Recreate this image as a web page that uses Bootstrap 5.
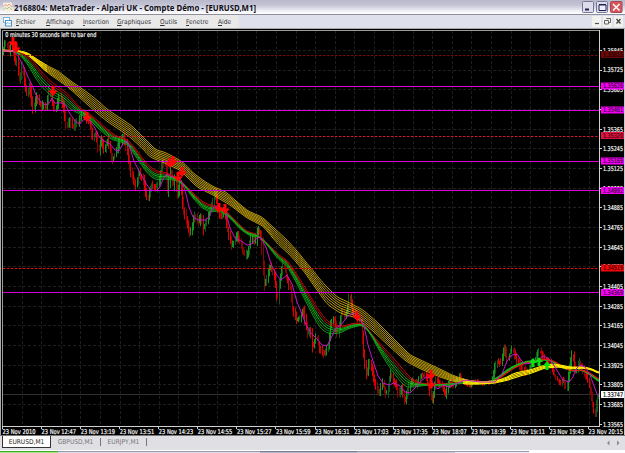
<!DOCTYPE html>
<html lang="fr">
  <head>
    <meta charset="UTF-8" />
    <meta name="viewport" content="width=device-width, initial-scale=1.0" />
    <title>MetaTrader - EURUSD,M1</title>
    <link
      rel="stylesheet"
      href="https://cdn.jsdelivr.net/npm/bootstrap@5.3.3/dist/css/bootstrap.min.css"
    />
    <style>
      body {
        width: 625px;
        height: 453px;
        font-family: "DejaVu Sans Condensed", "DejaVu Sans", sans-serif;
        font-size: 6.6px;
        line-height: 1;
        background: #e0dfe3;
      }
      .title-bar {
        height: 15px;
        padding: 0 2px 0 3px;
        background: linear-gradient(#b9b9cc, #c3c3d4 35%, #f2f2f7 80%, #fff);
        border-bottom: 1px solid #8d8d9c;
      }
      .title-text {
        font-family: "Noto Sans", sans-serif;
        font-size: 9.2px;
        font-weight: 700;
        margin-left: 2px;
      }
      .menu-bar {
        height: 13px;
        padding: 0 2px 0 3px;
        background: linear-gradient(90deg, #e9e9ea 0 237px, #dee1ec 240px);
      }
      .menu-items {
        display: grid;
        grid-template-columns: 30px 37px 34px 43px 26px 32px 20px;
        margin-left: 3px;
        padding-top: 2px;
        color: #33333a;
      }
      .menu-items u {
        text-underline-offset: 1px;
        text-decoration-thickness: 1px;
      }
      .chart-area {
        height: 407px;
      }
      .sheet-tabs {
        height: 15px;
        padding-left: 2px;
        background: #e0dfe3;
        border-top: 1px solid #777;
        color: #77777b;
      }
      .sheet-tab {
        height: 12px;
        padding-top: 3px;
      }
      .sheet-tab.current {
        width: 49px;
        color: #222;
        background: #fff;
        border: solid #333;
        border-width: 0 1px 1px 1px;
      }
      .sheet-tab.idle {
        border-right: 1px solid #77777b;
        height: 8px;
        margin-top: 2px;
        padding-top: 1px;
      }
      .strip {
        height: 3px;
        background: #fff;
      }
      .strip span {
        border-top: 1px solid #9a9aae;
        height: 2px;
        margin-top: 1px;
      }
      .strip .s1 { width: 58px; background: #a5e08b; border-color: #3fae2a; }
      .strip .s2 { width: 202px; background: #dcdce8; }
      .strip .s3 { width: 97px; background: #b4b8cb; border-color: #777b94; }
      .strip .s4 { width: 98px; background: #c6c6d2; }
      .strip .s5 { width: 74px; background: #ececf8; }
    </style>
  </head>
  <body class="d-flex flex-column overflow-hidden">
    <header class="title-bar d-flex align-items-center flex-shrink-0">
      <svg width="9" height="10" viewBox="0 0 9 10">
        <rect width="9" height="9" y=".5" rx="1" fill="#f8ecd8" />
        <path d="M0 5 2 2.500 4.500 4 6 2 9 5" fill="none" stroke="#e8a09a" />
        <path d="M0 8 2 5.500 4 7 6 5 9 8" fill="none" stroke="#a8cc94" />
      </svg>
      <svg class="title-text" width="246" height="14">
        <text x="0" y="10.500" textLength="242" lengthAdjust="spacingAndGlyphs" fill="#101018">2168804: MetaTrader - Alpari UK - Compte Démo - [EURUSD,M1]</text>
      </svg>
      <svg class="ms-auto" width="41" height="14" viewBox="0 0 41 14">
        <g stroke="#77779a" fill="#dcdcea">
          <rect x=".5" y="1.500" width="11" height="11" rx="1" />
          <rect x="14.500" y="1.500" width="11" height="11" rx="1" />
        </g>
        <rect x="28.500" y="1.500" width="11.500" height="11" rx="1" fill="#d9545a" stroke="#a04a55" />
        <path d="M3 9.500h4" stroke="#22224e" stroke-width="2" />
        <path d="M17 5h7v5.500h-7zM17 4.500h7" fill="#eef" stroke="#22224e" />
        <path d="m31 4 6.500 6.500m0-6.500L31 10.500" stroke="#fff" stroke-width="1.500" />
      </svg>
    </header>

    <nav class="menu-bar d-flex align-items-center flex-shrink-0">
      <svg width="10" height="10" viewBox="0 0 10 10">
        <rect x=".5" y=".5" width="6" height="5" fill="#fff" stroke="#78b4dc" />
        <rect x="2.500" y="3.500" width="6" height="5.500" fill="#fff" stroke="#4a94cc" />
        <path d="M3 7 5 5.500 6.500 7 8.500 5" fill="none" stroke="#4a94cc" stroke-width=".7" />
      </svg>
      <div class="menu-items text-nowrap">
        <span><u>F</u>ichier</span>
        <span><u>A</u>ffichage</span>
        <span><u>I</u>nsertion</span>
        <span><u>G</u>raphiques</span>
        <span><u>O</u>utils</span>
        <span><u>F</u>enetre</span>
        <span><u>A</u>ide</span>
      </div>
      <svg class="ms-auto" width="31" height="11" viewBox="0 0 31 11">
        <path d="M0 0h9v11H0zM11 0h9v11h-9zM22 0h9v11h-9z" fill="#f1f1ee" />
        <path d="M3 7.500h4" stroke="#555" stroke-width="1.200" />
        <path d="M14.500 3V2.500h4v4H17M12.500 4.500h4v3.500h-4z" fill="none" stroke="#666" />
        <path d="m24.500 3 4 4.500m0-4.500-4 4.500" stroke="#444" stroke-width="1.300" />
      </svg>
    </nav>

    <main class="chart-area flex-shrink-0">
      <svg id="chart" class="d-block" width="625" height="407" viewBox="0 28 625 407"></svg>
    </main>

    <footer class="sheet-tabs d-flex flex-shrink-0">
      <span class="sheet-tab current text-center">EURUSD,M1</span>
      <span class="sheet-tab idle text-center" style="width: 50px">GBPUSD,M1</span>
      <span class="sheet-tab idle text-center" style="width: 46px">EURJPY,M1</span>
      <svg class="ms-auto me-1" width="16" height="13" viewBox="0 0 16 13">
        <path d="M4.500 4.500v5L2 7zM12 4.500v5L14.500 7z" fill="#88888c" />
      </svg>
    </footer>
    <div class="strip d-flex flex-shrink-0">
      <span class="s1"></span><span class="s2"></span><span class="s3"></span
      ><span class="s4"></span><span class="s5"></span>
    </div>

    <script src="https://cdn.jsdelivr.net/npm/bootstrap@5.3.3/dist/js/bootstrap.bundle.min.js"></script>
    <script>
      const chart = document.getElementById("chart");
      const NS = "http://www.w3.org/2000/svg";

      function add(tag, attrs, text) {
        const el = document.createElementNS(NS, tag);
        for (const key in attrs) el.setAttribute(key, attrs[key]);
        if (text) el.textContent = text;
        chart.appendChild(el);
        return el;
      }

      // "x,y x,y ..." -> [[x, y], ...]
      function pts(str) {
        return str.trim().split(/\s+/).map((p) => p.split(",").map(Number));
      }

      function valueAt(list, x) {
        for (let i = 1; i < list.length; i++) {
          if (x <= list[i][0]) {
            const a = list[i - 1];
            const b = list[i];
            return a[1] + ((b[1] - a[1]) * (x - a[0])) / (b[0] - a[0]);
          }
        }
        return list[list.length - 1][1];
      }

      function smoothAt(list, x) {
        let sum = 0;
        for (let d = -3; d <= 3; d++) {
          sum += valueAt(list, Math.max(list[0][0], Math.min(599, x + d)));
        }
        return sum / 7;
      }

      // Frame
      add("rect", { x: 0, y: 28, width: 625, height: 407, fill: "#000" });
      add("path", { d: "M0 28.500H625M.5 28V435", stroke: "#a5a8a5", fill: "none" });
      add("path", { d: "M624.500 29V435", stroke: "#c8c8cc" });

      // Grid
      for (let i = 0; i < 30; i++) {
        const x = Math.floor(22.3 + i * 19.55) + 0.5;
        add("path", { d: `M${x} 31V426`, stroke: "#1d1d1d", "stroke-dasharray": "3 2" });
      }
      for (let i = 0; i < 19; i++) {
        const y = Math.floor(50.4 + i * 19.68) + 0.5;
        add("path", { d: `M3 ${y}H600`, stroke: "#1f1f1f", "stroke-dasharray": "3 2" });
      }
      add("path", { d: "M3 394.500H600", stroke: "#303030" });

      // Price bars
      const price = pts(`3,51 5,45 7,42 10,52 12,42 16,62 18,58 20,82 23,66 27,95 30,84
        34,113 37,95 42,108 44,104 47,108 50,90 53,103 56,109 60,96 64,104 67,128 70,120
        74,128 77,120 79,123 83,112 86,116 90,122 93,136 97,134 99,153 102,138 105,150
        108,138 113,161 118,148 120,142 124,136 126,141 130,165 133,178 137,187 139,170
        144,180 148,199 152,185 157,188 160,178 163,162 167,166 168,196 171,167 174,188
        176,178 178,198 181,180 183,205 188,225 191,233 195,214 199,223 202,215 204,231
        209,215 214,200 216,190 219,212 222,218 225,208 228,228 232,247 238,234 242,246
        245,255 249,252 252,235 256,242 258,228 262,236 265,288 269,270 271,266 275,274
        278,303 280,280 284,262 288,280 291,288 293,308 297,321 300,318 304,308 308,335
        311,328 313,348 317,334 320,348 325,354 329,345 331,326 334,316 338,335 342,312
        345,316 348,310 350,294 353,310 357,316 362,322 364,350 367,377 370,360 374,376
        379,394 383,382 387,395 391,373 396,384 400,396 402,384 405,401 410,385 413,380
        417,384 421,374 426,376 431,393 433,401 436,380 442,384 446,395 450,382 455,384
        460,376 465,383 470,386 476,380 484,384 492,381 497,361 502,362 505,345 508,360
        513,347 515,355 519,362 521,367 527,372 532,364 536,358 540,350 545,358 550,362
        555,375 560,382 564,380 567,388 571,365 573,351 576,372 580,362 584,372 589,380
        592,397 594,408 596,413 598,397 600,393`);
      let seed = 11;
      function rand() {
        seed = (seed * 16807) % 2147483647;
        return seed / 2147483647;
      }
      for (let x = 3.5; x < 600; x += 1.225) {
        const a = valueAt(price, x - 0.9);
        const b = valueAt(price, x + 0.9);
        const quiet = x > 462 && x < 493;
        const w = quiet ? 1.5 : 4.5;
        const top = Math.min(a, b) - rand() * w;
        const bottom = Math.max(a, b) + 1 + rand() * w;
        const down = b - a + (rand() - 0.5) * 1.5 > -0.3;
        const r = rand();
        const color = down
          ? r < 0.6 ? "#dc0000" : "#850404"
          : r < 0.5 ? "#18921e" : "#14561a";
        add("path", {
          d: `M${Math.floor(x) + 0.5} ${top.toFixed(1)}V${bottom.toFixed(1)}`,
          stroke: color,
        });
      }

      // Ribbon between two edge curves, drawn as parallel averages
      function ribbon(upper, lower, colors, from, to, width) {
        colors.forEach((color, i) => {
          const t = i / (colors.length - 1);
          let d = "";
          for (let x = from; x <= to; x += 2) {
            const y = smoothAt(upper, x) * (1 - t) + smoothAt(lower, x) * t;
            d += (d ? "L" : "M") + x + " " + y.toFixed(2);
          }
          add("path", { d: d, stroke: color, fill: "none", "stroke-width": width });
        });
      }

      const slowTop = pts(`3,50 20,51 28,53 38,60 48,66 58,71 68,79 78,86 88,93 98,101
        108,110 120,118 132,126 144,138 156,150 164,152 174,157 184,163 192,172 204,181
        214,187 226,192 236,201 248,211 262,217 274,228 287,240 297,251 310,267 323,283
        337,297 350,303 363,310 377,322 393,338 410,355 427,363 440,369 452,375 466,380
        480,382 495,381 505,378 515,373 530,370 545,365 555,364 570,367 584,367 592,369 600,373`);
      const slowLow = pts(`3,51 20,52 28,55 38,64 48,73 58,80 68,87 78,96 88,105 98,114
        108,122 120,130 130,137 142,148 150,157 162,162 180,170 197,187 213,195 230,205
        247,218 263,226 277,243 290,255 303,270 317,290 327,304 340,313 357,318 373,331
        390,347 407,362 423,370 440,377 452,381 466,384 480,384 495,383 508,380 520,376
        532,373 545,368 558,367 570,369 584,368 592,370 600,374`);
      const midTop = pts(`3,51 14,51 24,54 32,60 40,70 48,79 58,87 67,93 74,101 80,108
        90,114 98,121 108,130 116,136 126,139 132,144 140,155 148,165 156,171 163,172
        170,174 180,180 188,188 196,196 203,202 210,205 218,206 226,211 236,221 246,231
        256,234 264,240 272,248 280,256 287,260 296,273 306,289 316,306 326,320 334,325
        344,326 354,323 364,324 374,337 384,348 396,361 406,373 414,381 426,384 440,384
        470,382 490,382 500,378 508,372 516,367 526,363 536,361 546,359 556,362 564,368
        572,371 582,370 590,373 600,380`);
      const midLow = pts(`3,51 14,51 22,57 30,68 38,82 46,91 54,98 62,101 72,110 80,114
        90,120 100,130 112,140 122,142 128,145 138,160 148,174 156,180 164,179 175,180
        184,185 192,197 202,208 210,212 220,211 230,218 240,229 250,236 260,237 268,246
        278,259 287,266 296,282 306,302 316,321 322,330 330,334 340,333 350,328 362,325
        370,333 380,352 390,368 400,381 406,387 414,387 428,385 440,386 456,384 470,382
        490,382 498,377 508,369 518,364 528,361 540,360 550,360 560,367 572,371 582,370
        592,376 600,383`);
      const fast = pts(`3,51 14,51 18,56 23,65 28,77 32,85 36,95 40,101 45,105 49,103
        52,98 55,103 62,103 66,106 70,114 76,122 80,124 83,120 87,118 90,121 95,128 99,137
        104,141 110,144 115,150 119,151 123,144 127,141 130,148 134,161 138,169 143,178
        147,185 151,190 156,191 160,187 163,179 167,174 170,176 176,178 181,180 185,190
        189,207 193,217 198,220 205,220 209,217 213,208 217,206 221,209 226,213 230,228
        235,238 241,241 247,245 252,244 256,239 260,237 266,247 271,264 276,274 281,280
        287,275 292,284 297,302 302,314 306,325 311,333 317,339 322,345 327,346 331,338
        336,328 341,325 347,317 353,313 357,315 361,320 364,326 368,345 373,361 378,376
        383,383 389,385 394,383 400,386 405,392 410,393 415,388 420,382 426,377 430,378
        434,386 438,389 443,385 449,387 456,384 465,380 480,382 495,382 502,374 507,361
        512,355 517,354 521,360 525,364 532,363 539,359 544,356 549,359 553,364 558,372
        563,380 569,382 573,377 576,369 580,365 585,367 590,375 594,386 597,394 600,397`);

      const gold = Array(7).fill("#dcb60c");
      ribbon(slowTop, slowLow, gold, 3, 480, 0.85);
      ribbon(slowTop, slowLow, Array(4).fill("#ffe600"), 15, 47, 0.8);
      ribbon(slowTop, slowLow, Array(3).fill("#f0a020"), 3, 17, 0.9);
      const mids = ["#d00a0a", "#b80c0c", "#14a81a", "#12d01c", "#118c18", "#12a81a"];
      ribbon(midTop, midLow, mids, 13, 497, 0.9);
      const tail = ["#14a81a", "#12d01c", "#12a81a", "#f01010"];
      ribbon(midLow, midTop, tail, 495, 599, 1.1);
      ribbon(slowTop, slowLow, Array(4).fill("#ffea00"), 463, 599, 1.1);
      add("polyline", {
        points: fast.map((p) => p.join(",")).join(" "),
        fill: "none",
        stroke: "#c414c8",
      });

      // Horizontal levels
      [86, 110, 161, 190, 292].forEach((y) => {
        add("path", { d: `M3 ${y + 0.5}H600`, stroke: "#d400d8", "stroke-width": 1.1 });
      });
      [[55, "#7c0c0c"], [136, "#cc1836"], [268, "#e00808"]].forEach((l) => {
        add("path", { d: `M3 ${l[0] + 0.5}H600`, stroke: l[1], "stroke-dasharray": "2.500 1.500" });
      });

      // Signal arrows
      [[13, 42], [16, 48], [53, 91], [87, 117], [170, 163], [173, 161], [182, 172], [178, 177],
        [219, 208], [225, 209], [357, 316], [431, 375], [431, 384]].forEach((p) => {
        add("path", {
          d: `M${p[0]} ${p[1] + 5}l-4.500 -5l2 -1l1 1v-5h3v5l1 -1l2 1z`,
          fill: "#ff0505",
        });
      });
      [[533, 363], [539, 362], [547, 366]].forEach((p) => {
        add("path", { d: `M${p[0]} ${p[1] - 5}l-4 5h2.500v4h3v-4h2.500z`, fill: "#08e010" });
      });

      // Axes
      add("path", { d: "M2.500 427V30.500H600", stroke: "#9a9a9a", fill: "none" });
      add("path", { d: "M599.500 30V426.500M2 426.500H600", stroke: "#d0d0d0", fill: "none" });

      function label(x, y, text, len, fill) {
        add("text", {
          x: x, y: y, fill: fill, "font-size": 6.6, textLength: len,
          lengthAdjust: "spacingAndGlyphs",
          "font-family": "DejaVu Sans Condensed, sans-serif",
          stroke: fill, "stroke-width": 0.2,
        }, text);
      }

      for (let i = 0; i < 20; i++) {
        const y = 50.4 + i * 19.68;
        add("path", { d: `M600 ${Math.floor(y) + 0.5}h2`, stroke: "#d0d0d0" });
        label(603, y + 2.4, (1.35845 - i * 0.0012).toFixed(5), 20, "#f4f4f4");
      }
      [
        [54.5, "1.35815", "#6c0808", "#220000"],
        [86, "1.35628", "#f800f8", "#400040"],
        [110, "1.35481", "#f800f8", "#400040"],
        [135.5, "1.35320", "#e01440", "#480010"],
        [161, "1.35169", "#f800f8", "#400040"],
        [190.5, "1.34992", "#f800f8", "#400040"],
        [268, "1.34519", "#f40808", "#480000"],
        [292.5, "1.34369", "#f800f8", "#400040"],
        [394.5, "1.33747", "#ffffff", "#111111"],
      ].forEach((b) => {
        add("rect", { x: 601, y: b[0] - 3.5, width: 23, height: 7, fill: b[2] });
        label(603, b[0] + 2.4, b[1], 20, b[3]);
      });

      const times = ["2010", "12:47", "13:19", "13:51", "14:23", "14:55", "15:27", "15:59",
        "16:31", "17:03", "17:35", "18:07", "18:39", "19:11", "19:43", "20:15"];
      times.forEach((t, i) => {
        const x = 2.5 + i * 39.07;
        add("path", { d: `M${Math.floor(x) + 0.5} 427v2`, stroke: "#d0d0d0" });
        label(x, 433.6, "23 Nov " + t, i ? 34.5 : 33, "#f4f4f4");
      });
      label(5.3, 36.8, "0 minutes 30 seconds left to bar end", 91, "#f4f4f4");
    </script>
  </body>
</html>
